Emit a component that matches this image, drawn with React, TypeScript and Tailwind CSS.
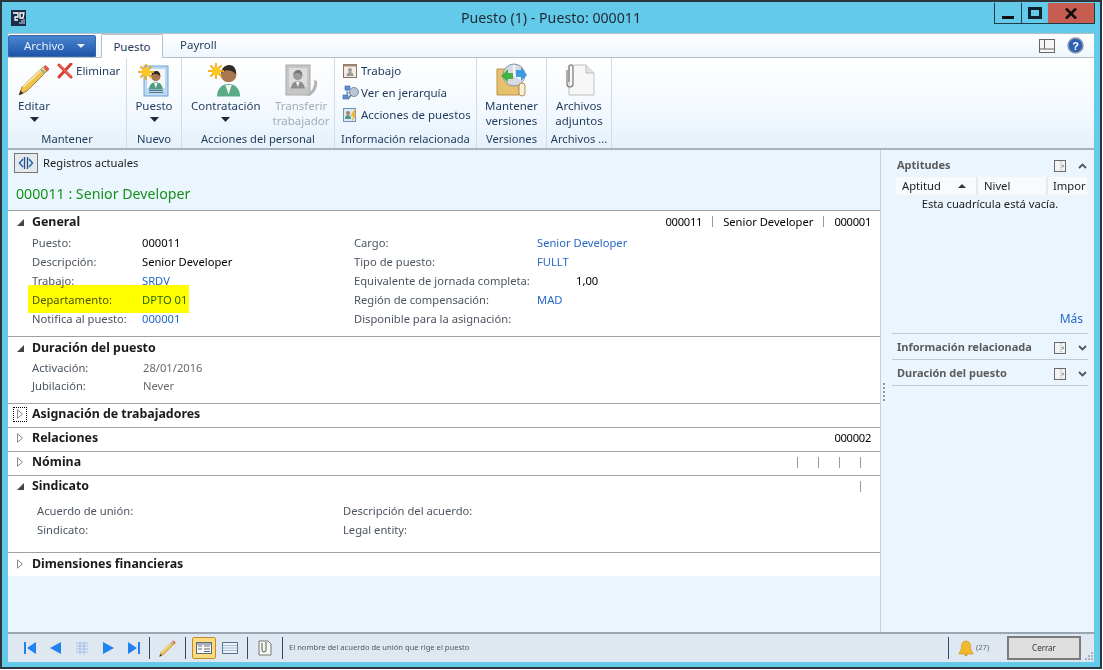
import type { ReactNode } from "react";

const font = { fontFamily: '"Noto Sans", "Open Sans", sans-serif' };

const Caret = () => (
  <svg width="9" height="5" viewBox="0 0 9 5" className="mx-auto">
    <path d="M0 0h9L4.5 5z" fill="#1e2a3a" />
  </svg>
);

const Pencil = ({ size = 32 }: { size?: number }) => (
  <svg width={size} height={size} viewBox="0 0 32 32">
    <path d="M1 31 4 23 25 3l4 4L9 27z" fill="#f0c24a" stroke="#8a6d2a" strokeWidth=".8" />
    <path d="M5 23 25.500 4" stroke="#fbe7a0" strokeWidth="1.800" />
    <path d="m25.500 2.500 2-1.500 4 4-2 2.500z" fill="#d9534f" />
    <path d="m23.500 4.500 4 4-1.500 1.500-4-4z" fill="#9fb0a0" />
    <path d="M1 31l1.500-4.500 3 3z" fill="#333" />
  </svg>
);

const RedX = () => (
  <svg width="16" height="16" viewBox="0 0 16 16">
    <path d="M2 2 14 14M14 1 2 14" stroke="#d8402f" strokeWidth="3" strokeLinecap="round" />
    <path d="M2.5 2 14 13.5" stroke="#f4a091" strokeWidth="0.8" />
  </svg>
);

const Sun = ({ cx, cy, r = 6 }: { cx: number; cy: number; r?: number }) => (
  <g>
    {[0, 45, 90, 135].map((a) => (
      <rect key={a} x={cx - r * 1.6} y={cy - 0.9} width={r * 3.2} height="1.8" fill="#f5a90f" transform={`rotate(${a} ${cx} ${cy})`} />
    ))}
    <circle cx={cx} cy={cy} r={r * 0.85} fill="#fbc926" />
  </g>
);

const Person = ({ x, y, s = 1, shirt = "#5bab87", skin = "#a8764f", hair = "#2f2a26" }: { x: number; y: number; s?: number; shirt?: string; skin?: string; hair?: string }) => (
  <g transform={`translate(${x} ${y}) scale(${s})`}>
    <path d="M0 30c0-8 5-12 11-12s11 4 11 12z" fill={shirt} />
    <path d="M8 19h6l-3 9z" fill="#f1f1f1" />
    <circle cx="11" cy="9" r="7.5" fill={skin} />
    <path d="M4 8c0-6 5-8 8-8s7 3 6 9c-2-3-5-4-8-4-3 0-4 1-6 3z" fill={hair} />
  </g>
);

const PuestoIcon = () => (
  <svg width="34" height="34" viewBox="0 0 34 34">
    <rect x="7" y="3" width="24" height="30" fill="#bcd8f2" stroke="#6fa3d8" />
    <rect x="10" y="6" width="18" height="19" fill="#f4f6f8" />
    <Person x={12} y={8} s={0.62} shirt="#4f9a80" />
    <rect x="12" y="27" width="14" height="1" fill="#55708a" />
    <rect x="12" y="29" width="14" height="1" fill="#55708a" />
    <Sun cx={9} cy={9} r={5} />
  </svg>
);

const HireIcon = () => (
  <svg width="36" height="36" viewBox="0 0 36 36">
    <Person x={9} y={3} s={1.05} />
    <Sun cx={8} cy={9} r={5} />
  </svg>
);

const TransferIcon = () => (
  <svg width="34" height="34" viewBox="0 0 34 34">
    <rect x="2" y="2" width="24" height="30" fill="#c6c6c6" stroke="#aaa" />
    <rect x="5" y="5" width="18" height="19" fill="#ddd" />
    <Person x={7} y={7} s={0.62} shirt="#8c8c8c" skin="#9c9c9c" hair="#777" />
    <path d="M22 32c6-3 9-9 8-15l3 1c1 7-3 13-8 15z" fill="#b5b5b5" />
  </svg>
);

const SmallTrabajo = () => (
  <svg width="16" height="16" viewBox="0 0 16 16">
    <rect x="1.5" y="1.5" width="13" height="13" fill="#f3ece4" stroke="#8d6f60" />
    <rect x="1.5" y="1.5" width="13" height="2" fill="#a58878" />
    <circle cx="8" cy="7" r="2" fill="#9a9a9a" />
    <path d="M4.5 13c0-3 2-4 3.500-4s3.500 1 3.500 4z" fill="#9a9a9a" />
  </svg>
);

const SmallHierarchy = () => (
  <svg width="18" height="16" viewBox="0 0 18 16">
    <path d="M5 5v5M5 8h5" stroke="#5f7fae" />
    <rect x="3" y="1" width="5" height="4" fill="#5d90d6" stroke="#3b659f" strokeWidth="0.6" />
    <rect x="1" y="10" width="5" height="4" fill="#5d90d6" stroke="#3b659f" strokeWidth="0.6" />
    <circle cx="12" cy="7" r="4.500" fill="#b9c6d6" stroke="#7b8ea5" />
    <path d="m9 10-3 4" stroke="#66778c" strokeWidth="1.500" />
  </svg>
);

const SmallActions = () => (
  <svg width="16" height="16" viewBox="0 0 16 16">
    <rect x="1.500" y="1.500" width="12" height="13" fill="#dbe9f7" stroke="#6f93bd" />
    <circle cx="6" cy="6" r="2" fill="#b07f56" />
    <path d="M3 12c0-3 1.500-4 3-4s3 1 3 4z" fill="#4f9a80" />
    <path d="M12 3 8.500 9H11l-1.500 6 5-8H12l2-4z" fill="#f5b11f" />
  </svg>
);

const VersionsIcon = () => (
  <svg width="36" height="36" viewBox="0 0 36 36">
    <path d="M3 7h22v26H3z" fill="#e6c06c" stroke="#b8934a" />
    <circle cx="20" cy="13" r="11" fill="#d6dce2" stroke="#8899a8" />
    <path d="M20 13 20 3M20 13 10 15M20 13 29 18" stroke="#fff" strokeWidth="1.500" />
    <path d="M7 14 14 7v4h5v6h-5v3z" fill="#45b045" />
    <path d="M33 13 27 19v-4h-5V8h5V5z" fill="#3d9be0" />
    <rect x="25" y="21" width="6" height="13" rx="3" fill="#f6f0d8" stroke="#b8934a" />
  </svg>
);

const ClipDoc = () => (
  <svg width="36" height="36" viewBox="0 0 36 36">
    <path d="M8 3h17l8 8v22H8z" fill="#f7f7f7" stroke="#bfbfbf" />
    <path d="M25 3v8h8" fill="#e4e4e4" stroke="#bfbfbf" />
    <path d="M6 8v14a3 3 0 0 0 6 0V5a2 2 0 0 0-4 0v15" fill="none" stroke="#777" strokeWidth="1.200" />
  </svg>
);

const Logo = () => (
  <svg width="15" height="16" viewBox="0 0 15 16">
    <rect width="15" height="16" fill="#1c2c4c" />
    <path d="M2 3h5v4H4v3h3M9 3h4l-1 5H9z" fill="none" stroke="#fff" strokeWidth="1.300" />
    <path d="M9 12v2M11 10v4M13 9v5" stroke="#cfe0f0" strokeWidth="1" />
  </svg>
);

const RibbonGroup = ({ label, width, children }: { label: string; width: number; children: ReactNode }) => (
  <div className="flex flex-col h-full border-r border-[#d3dbe4] shrink-0" style={{ width }}>
    <div className="flex-1 flex min-h-0">{children}</div>
    <div className="h-[18px] text-center leading-[18px] whitespace-nowrap text-[#1e395b] text-[11.2px]">{label}</div>
  </div>
);

const BigBtn = ({ icon, lines, caret, disabled, className }: { icon: ReactNode; lines: string[]; caret?: boolean; disabled?: boolean; className?: string }) => (
  <div className={`flex flex-col items-center pt-[5px] ${disabled ? "text-[#a5adb5]" : "text-[#1e395b]"} ${className ?? ""}`}>
    <div className="h-[34px] flex items-center justify-center">{icon}</div>
    <div className="mt-[1px] leading-[15px] text-center whitespace-nowrap">
      {lines.map((l) => (
        <div key={l}>{l}</div>
      ))}
    </div>
    {caret && <div className="mt-[4px]"><Caret /></div>}
  </div>
);

const Triangle = ({ open, focus }: { open?: boolean; focus?: boolean }) => (
  <div className={`w-[12px] h-[13px] flex items-center justify-center ${focus ? "outline-1 outline-dotted outline-black" : ""}`}>
    {open ? (
      <svg width="7" height="7" viewBox="0 0 7 7">
        <path d="M7 0v7H0z" fill="#444" />
      </svg>
    ) : (
      <svg width="6" height="10" viewBox="0 0 6 10">
        <path d="M.5.800 5.500 5 .5 9.200z" fill="#fff" stroke="#8a8a8a" />
      </svg>
    )}
  </div>
);

const Section = ({ title, open, focus, right, children, height, headH = 22 }: { title: string; open?: boolean; focus?: boolean; right?: ReactNode; children?: ReactNode; height: number; headH?: number }) => (
  <div className="border-t border-[#a0a0a0] bg-white" style={{ height }}>
    <div className="flex items-center pl-[6px] pr-[9px]" style={{ height: headH }}>
      <div className="w-[18px] flex justify-start">
        <Triangle open={open} focus={focus} />
      </div>
      <div className="font-bold text-[12.4px] text-[#1b1b1b]">{title}</div>
      <div className="ml-auto flex items-center">{right}</div>
    </div>
    {children}
  </div>
);

const Field = ({ label, value, link, labelW, muted }: { label: string; value?: string; link?: boolean; labelW: number; muted?: boolean }) => (
  <div className="h-[19px] flex items-center whitespace-nowrap">
    <div className="text-[#4c5560] shrink-0" style={{ width: labelW }}>{label}</div>
    {value && <div className={link ? "text-[#2668c7]" : muted ? "text-[#6a6a6a]" : "text-black"}>{value}</div>}
  </div>
);

const HeaderTick = () => <div className="w-px h-[11px] bg-[#9a9a9a]" />;

const PanelIcon = () => (
  <svg width="12" height="12" viewBox="0 0 12 12">
    <rect x=".5" y=".5" width="11" height="11" fill="#f1f3f5" stroke="#6b6b6b" />
    <path d="M7 1v10" stroke="#9a9a9a" strokeDasharray="1 1" />
    <path d="M8.500 4.500 10 6 8.500 7.500z" fill="#555" />
  </svg>
);

const Chevron = ({ up }: { up?: boolean }) => (
  <svg width="9" height="6" viewBox="0 0 9 6">
    <path d={up ? "M1 5 4.500 1.500 8 5" : "M1 1l3.500 3.500L8 1"} fill="none" stroke="#555" strokeWidth="1.800" />
  </svg>
);

const PanelHead = ({ title, up }: { title: string; up?: boolean }) => (
  <div className="flex items-center h-[25px] pl-[5px] pt-[2px]">
    <div className="font-bold text-[#5c5c5c] text-[11px] whitespace-nowrap">{title}</div>
    <div className="ml-auto mr-[12px]"><PanelIcon /></div>
    <div className="w-[9px] mr-[1px]"><Chevron up={up} /></div>
  </div>
);

const NavTriangle = ({ d }: { d: string }) => (
  <svg width="14" height="14" viewBox="0 0 14 14">
    <path d={d} fill="#1e82f0" />
  </svg>
);

const StatusSep = () => <div className="w-px h-[22px] bg-[#2e4a68] shrink-0" />;

export default function App() {
  return (
    <div className="w-[1103px] h-[670px] bg-white overflow-hidden text-[11.5px]" style={font}>
      <div className="w-[1102px] h-[669px] border-2 border-[#2d363c] bg-[#63caea] flex flex-col">
        {/* title bar */}
        <div className="h-[31px] shrink-0 flex items-start relative pl-[9px] pr-[5px]">
          <div className="mt-[8px]"><Logo /></div>
          <div className="absolute inset-x-0 top-[6px] text-center text-[14.2px] text-[#1d2a33] leading-[20px]">Puesto (1) - Puesto: 000011</div>
          <div className="ml-auto flex h-[21px] mt-px border border-[#1f3a4a] border-t-0">
            <div className="w-[27px] border-r border-[#1f3a4a] flex items-end justify-center pb-[4px]">
              <div className="w-[12px] h-[3px] bg-[#111]" />
            </div>
            <div className="w-[26px] flex items-center justify-center">
              <div className="w-[14px] h-[12px] border-[3px] border-[#10222c]" />
            </div>
            <div className="w-[46px] bg-[#c75c50] flex items-center justify-center">
              <svg width="12" height="11" viewBox="0 0 12 11">
                <path d="M1 0.500 11 10.500M11 0.500 1 10.500" stroke="#111" strokeWidth="2.600" />
              </svg>
            </div>
          </div>
        </div>

        <div className="mx-[6px] flex-1 flex flex-col min-h-0 mb-[5px]">
          {/* tabs */}
          <div className="h-[24px] shrink-0 flex items-end bg-gradient-to-b from-white to-[#eef6fd] border-t border-[#b8c0c8] relative">
            <div className="w-[88px] h-[22px] bg-gradient-to-b from-[#4a86d0] to-[#1f55a8] rounded-t-[2px] text-[#e8f1fb] flex items-center pl-[15px] gap-[13px] border border-[#3468ad]">
              <span>Archivo</span>
              <svg width="8" height="4" viewBox="0 0 8 4">
                <path d="M0 0h8L4 4z" fill="#e8f1fb" />
              </svg>
            </div>
            <div className="ml-[5px] w-[62px] h-[24px] -mb-px bg-white border border-b-0 border-[#b8c0c8] rounded-t-[2px] flex items-center justify-center text-[#1e395b] relative z-10">Puesto</div>
            <div className="ml-[17px] h-[24px] flex items-center text-[#1e395b]">Payroll</div>
            <div className="ml-auto mr-[10px] h-full flex items-center gap-[12px]">
              <svg width="16" height="14" viewBox="0 0 16 14">
                <rect x=".5" y=".5" width="15" height="13" fill="#f6f6f6" stroke="#666" />
                <path d="M5.500 1v9M1 10h14" stroke="#666" />
              </svg>
              <svg width="17" height="17" viewBox="0 0 17 17">
                <circle cx="8.500" cy="8.500" r="7.500" fill="#2f5fb5" stroke="#8d9aa8" strokeWidth="1.500" />
                <text x="8.500" y="12.500" textAnchor="middle" fontSize="11" fontWeight="700" fill="#fff" fontFamily="Liberation Sans, sans-serif">?</text>
              </svg>
            </div>
          </div>

          {/* ribbon */}
          <div className="h-[93px] shrink-0 flex border-t border-[#b8c0c8] border-b-2 border-b-[#a9b2bb] bg-gradient-to-b from-white via-[#f5faff] to-[#e6f1fb]">
            <RibbonGroup label="Mantener" width={119}>
              <BigBtn className="ml-[10px]" icon={<Pencil />} lines={["Editar"]} caret />
              <div className="flex items-start gap-[3px] ml-[7px] pt-[5px] text-[#1e395b] h-fit">
                <RedX />
                <span className="leading-[16px]">Eliminar</span>
              </div>
            </RibbonGroup>
            <RibbonGroup label="Nuevo" width={55}>
              <BigBtn className="w-full" icon={<PuestoIcon />} lines={["Puesto"]} caret />
            </RibbonGroup>
            <RibbonGroup label="Acciones del personal" width={153}>
              <BigBtn className="ml-[9px]" icon={<HireIcon />} lines={["Contratación"]} caret />
              <BigBtn className="ml-[12px]" disabled icon={<TransferIcon />} lines={["Transferir", "trabajador"]} />
            </RibbonGroup>
            <RibbonGroup label="Información relacionada" width={142}>
              <div className="flex flex-col pl-[7px] pt-[4px] gap-[4px] text-[#1e395b] whitespace-nowrap">
                <div className="flex items-center gap-[3px] h-[18px]"><SmallTrabajo /><span>Trabajo</span></div>
                <div className="flex items-center gap-[1px] h-[18px]"><SmallHierarchy /><span>Ver en jerarquía</span></div>
                <div className="flex items-center gap-[3px] h-[18px]"><SmallActions /><span>Acciones de puestos</span></div>
              </div>
            </RibbonGroup>
            <RibbonGroup label="Versiones" width={70}>
              <BigBtn className="w-full" icon={<VersionsIcon />} lines={["Mantener", "versiones"]} />
            </RibbonGroup>
            <RibbonGroup label="Archivos ..." width={65}>
              <BigBtn className="w-full" icon={<ClipDoc />} lines={["Archivos", "adjuntos"]} />
            </RibbonGroup>
          </div>

          {/* main */}
          <div className="flex-1 flex min-h-0 bg-[#eaf5fd] text-[11.2px]">
            <div className="w-[872px] shrink-0 flex flex-col">
              <div className="h-[60px] shrink-0 pl-[6px] pt-[3px]">
                <div className="flex items-center gap-[5px] h-[20px]">
                  <div className="w-[24px] h-[20px] border border-[#777] bg-[#e4e9ee] flex items-center justify-center">
                    <svg width="16" height="12" viewBox="0 0 16 12">
                      <path d="M5 2 1.500 6 5 10M11 2l3.500 4L11 10" fill="none" stroke="#2b62b5" strokeWidth="1.500" />
                      <path d="M6.500 0v12M9.500 0v12" stroke="#2b4f7f" strokeWidth="1.300" />
                    </svg>
                  </div>
                  <span className="text-[#1d1d1d]">Registros actuales</span>
                </div>
                <div className="mt-[11px] pl-[2px] text-[14.2px] leading-[20px] text-[#17901b]">000011 : Senior Developer</div>
              </div>

              <Section
                title="General"
                open
                height={126}
                right={
                  <div className="flex items-center text-black">
                    <span className="tracking-[-0.3px]">000011</span>
                    <span className="mx-[10px]"><HeaderTick /></span>
                    <span>Senior Developer</span>
                    <span className="mx-[10px]"><HeaderTick /></span>
                    <span className="tracking-[-0.3px]">000001</span>
                  </div>
                }
              >
                <div className="relative flex pl-[24px] pt-px">
                  <div className="w-[322px]">
                    <Field labelW={110} label="Puesto:" value="000011" />
                    <Field labelW={110} label="Descripción:" value="Senior Developer" />
                    <Field labelW={110} label="Trabajo:" value="SRDV" link />
                    <Field labelW={110} label="Departamento:" value="DPTO 01" link />
                    <Field labelW={110} label="Notifica al puesto:" value="000001" link />
                  </div>
                  <div>
                    <Field labelW={183} label="Cargo:" value="Senior Developer" link />
                    <Field labelW={183} label="Tipo de puesto:" value="FULLT" link />
                    <div className="h-[19px] flex items-center whitespace-nowrap">
                      <div className="text-[#4c5560] w-[222px]">Equivalente de jornada completa:</div>
                      <div className="text-black">1,00</div>
                    </div>
                    <Field labelW={183} label="Región de compensación:" value="MAD" link />
                    <Field labelW={183} label="Disponible para la asignación:" />
                  </div>
                  <div className="absolute left-[20px] top-[52px] w-[161px] h-[28px] bg-[#ffff00] mix-blend-multiply" />
                </div>
              </Section>

              <Section title="Duración del puesto" open height={67}>
                <div className="pl-[24px]">
                  <Field labelW={111} label="Activación:" value="28/01/2016" muted />
                  <div className="-mt-px">
                    <Field labelW={111} label="Jubilación:" value="Never" muted />
                  </div>
                </div>
              </Section>

              <Section title="Asignación de trabajadores" focus height={24} headH={20} />
              <Section title="Relaciones" height={24} headH={20} right={<span className="text-black tracking-[-0.3px]">000002</span>} />
              <Section
                title="Nómina"
                height={24}
                headH={20}
                right={
                  <div className="flex gap-[20px] mr-[10px]">
                    <HeaderTick />
                    <HeaderTick />
                    <HeaderTick />
                    <HeaderTick />
                  </div>
                }
              />
              <Section title="Sindicato" open height={77} headH={20} right={<div className="mr-[10px]"><HeaderTick /></div>}>
                <div className="flex pl-[29px] pt-[6px]">
                  <div className="w-[306px]">
                    <Field labelW={110} label="Acuerdo de unión:" />
                    <Field labelW={110} label="Sindicato:" />
                  </div>
                  <div>
                    <Field labelW={180} label="Descripción del acuerdo:" />
                    <Field labelW={180} label="Legal entity:" />
                  </div>
                </div>
              </Section>
              <Section title="Dimensiones financieras" height={24} />
            </div>

            {/* right panel */}
            <div className="flex-1 border-l border-[#c3d2e0] pl-[11px] pr-[6px] relative">
              <div className="absolute left-[2px] top-[233px] flex flex-col gap-[2px]">
                {[0, 1, 2, 3, 4].map((i) => (
                  <div key={i} className="w-[2px] h-[2px] bg-[#8a97a5]" />
                ))}
              </div>
              <div className="pt-[2px]">
                <PanelHead title="Aptitudes" up />
              </div>
              <div className="flex h-[18px] bg-[#f7fbfe] text-[#1b1b1b] overflow-hidden ml-[4px] mr-[1px] items-center whitespace-nowrap">
                <div className="w-[82px] pl-[6px] flex items-center border-r-2 border-[#e3ebf2] h-full">
                  <span>Aptitud</span>
                  <svg width="8" height="4" viewBox="0 0 8 4" className="ml-[17px]">
                    <path d="M4 0l4 4H0z" fill="#333" />
                  </svg>
                </div>
                <div className="w-[70px] pl-[6px] border-r-2 border-[#e3ebf2] h-full flex items-center">Nivel</div>
                <div className="pl-[5px]">Impor</div>
              </div>
              <div className="text-center text-[#1b1b1b] leading-[19px] -mt-px">Esta cuadrícula está vacía.</div>
              <div className="h-[115px] flex items-end justify-end pr-[5px] text-[#2668c7] text-[12px]">Más</div>
              <div className="mt-[5px] border-t border-[#bccad8]">
                <PanelHead title="Información relacionada" />
              </div>
              <div className="border-t border-[#bccad8]">
                <PanelHead title="Duración del puesto" />
              </div>
              <div className="border-t border-[#bccad8]" />
            </div>
          </div>

          {/* status bar */}
          <div className="h-[30px] shrink-0 border-t-2 border-[#9aa6b2] bg-[#dfe7f0] flex items-center pl-[15px]">
            <div className="flex items-center gap-[12px] mr-[8px]">
              <NavTriangle d="M1 1h2v12H1zM13 1v12L4 7z" />
              <NavTriangle d="M12 1v12L1 7z" />
              <svg width="14" height="12" viewBox="0 0 14 12">
                <path d="M1 1h12M1 4h12M1 7h12M1 10h12M5 0v12M9 0v12" stroke="#a8c3e8" strokeWidth="1.200" />
              </svg>
              <NavTriangle d="M2 1v12l11-6z" />
              <NavTriangle d="M1 1v12l9-6zM11 1h2v12h-2z" />
            </div>
            <StatusSep />
            <div className="mx-[9px]"><Pencil size={17} /></div>
            <StatusSep />
            <div className="ml-[6px] w-[24px] h-[22px] rounded-[2px] border border-[#c08a30] bg-[#fedc7e] flex items-center justify-center">
              <svg width="16" height="12" viewBox="0 0 16 12">
                <rect x=".5" y=".5" width="15" height="11" fill="#fafafa" stroke="#5a6a7a" />
                <path d="M2 4h4M2 7h4M8 4h6M8 7h6M8 9.500h6M1 2h14" stroke="#5a6a7a" />
              </svg>
            </div>
            <div className="ml-[6px] mr-[9px]">
              <svg width="16" height="12" viewBox="0 0 16 12">
                <rect x=".5" y=".5" width="15" height="11" fill="#eef3fa" stroke="#5a7296" />
                <path d="M1 3.500h14M1 6h14M1 8.500h14" stroke="#a9bdd8" />
              </svg>
            </div>
            <StatusSep />
            <div className="mx-[10px]">
              <svg width="14" height="16" viewBox="0 0 14 16">
                <path d="M1 1h9l3 3v11H1z" fill="#f6f6f2" stroke="#777" />
                <path d="M4 3v7a2 2 0 0 0 4 0V2" fill="none" stroke="#555" />
              </svg>
            </div>
            <StatusSep />
            <div className="ml-[6px] text-[7.6px] text-[#4f5a66] whitespace-nowrap">El nombre del acuerdo de unión que rige el puesto</div>
            <div className="ml-auto flex items-center h-full">
              <StatusSep />
              <svg width="16" height="17" viewBox="0 0 16 17" className="ml-[9px]">
                <path d="M8 1c3 0 4.500 2.500 4.500 5.500 0 3 1 5 2.500 6.500v1H1v-1c1.500-1.500 2.500-3.500 2.500-6.500C3.500 3.500 5 1 8 1z" fill="#f2b92a" stroke="#c58e12" strokeWidth=".6" />
                <path d="M6 14.500h4l-2 2z" fill="#c58e12" />
              </svg>
              <span className="ml-[2px] text-[7.6px] text-[#5a6a7a] w-[12px]">(27)</span>
              <div className="ml-[19px] w-[74px] h-[24px] border-2 border-[#7b7b7b] bg-[#dedede] flex items-center justify-center text-[8px] text-[#333]">Cerrar</div>
              <div className="w-[13px] h-full flex items-end justify-end">
                <svg width="11" height="11" viewBox="0 0 11 11">
                  <path d="M8 1h2v2H8zM5 4h2v2H5zM8 4h2v2H8zM2 7h2v2H2zM5 7h2v2H5zM8 7h2v2H8z" fill="#aab4be" />
                </svg>
              </div>
            </div>
          </div>
        </div>
      </div>
    </div>
  );
}
